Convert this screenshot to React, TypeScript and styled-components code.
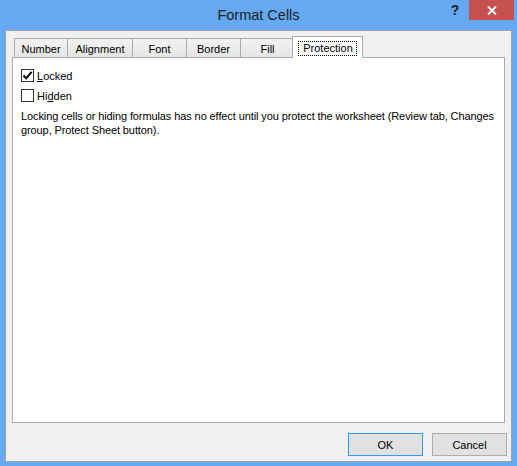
import React, { useState } from "react";
import styled, { createGlobalStyle, css } from "styled-components";

const GlobalStyle = createGlobalStyle`
  html, body {
    margin: 0;
    padding: 0;
    background: #64a9f2;
  }
  body {
    font-family: "Liberation Sans", Arial, sans-serif;
    font-size: 11px;
    color: #000;
  }
`;

const Window = styled.div`
  width: 517px;
  height: 466px;
  display: flex;
  flex-direction: column;
  background: #64a9f2;
  box-sizing: border-box;
`;

const TitleBar = styled.div`
  height: 30px;
  flex: none;
  display: grid;
  grid-template-columns: 1fr auto 1fr;
  align-items: start;
`;

const Title = styled.div`
  grid-column: 2;
  font-size: 14.5px;
  line-height: 30px;
  color: #222;
  white-space: nowrap;
`;

const TitleButtons = styled.div`
  grid-column: 3;
  display: flex;
  justify-content: flex-end;
  padding-right: 3px;
`;

const HelpButton = styled.div`
  width: 28px;
  height: 20px;
  display: flex;
  align-items: center;
  justify-content: center;
  font-weight: bold;
  font-size: 14px;
  color: #222;
`;

const CloseButton = styled.div`
  width: 45px;
  height: 20px;
  display: flex;
  align-items: center;
  justify-content: center;
  background: #c75050;
`;

const Client = styled.div`
  flex: 1;
  margin: 0 5px 4px;
  background: #f0f0f0;
  border: 1px solid #a3a3a3;
  display: flex;
  flex-direction: column;
  padding: 5px 6px 5px;
  min-height: 0;
`;

const TabStrip = styled.div`
  display: flex;
  align-items: flex-end;
  height: 21px;
  padding-left: 2px;
  flex: none;
`;

const Tab = styled.div<{ $width: number; $active?: boolean }>`
  box-sizing: border-box;
  width: ${({ $width }) => $width}px;
  height: 19px;
  margin-left: -1px;
  border: 1px solid #acacac;
  border-bottom: none;
  background: linear-gradient(#f2f2f2, #e6e6e6);
  display: flex;
  justify-content: center;
  align-items: flex-start;
  padding-top: 4px;
  line-height: 13px;
  white-space: nowrap;

  &:first-child {
    margin-left: 0;
  }

  ${({ $active }) =>
    $active &&
    css`
      height: 22px;
      margin-left: -3px;
      margin-bottom: -1px;
      padding-top: 4px;
      background: #fff;
      position: relative;
      z-index: 1;
    `}
`;

const FocusLabel = styled.span`
  border: 1px dotted #000;
  padding: 0 3px 0 4px;
  line-height: 13px;
`;

const Panel = styled.div`
  flex: 1;
  background: #fff;
  border: 1px solid #acacac;
  padding: 11px 8px 0;
  min-height: 0;
`;

const CheckRow = styled.label`
  display: flex;
  align-items: center;
  height: 13px;
  margin-bottom: 7px;
  gap: 3px;
`;

const Box = styled.span`
  box-sizing: border-box;
  width: 13px;
  height: 13px;
  border: 1px solid #333;
  background: #fff;
  display: flex;
  align-items: center;
  justify-content: center;
`;

const LabelText = styled.span`
  line-height: 13px;
  padding-top: 2px;
`;

const Key = styled.span`
  text-decoration: underline;
`;

const Note = styled.p`
  margin: 5px 0 0;
  line-height: 14px;
  letter-spacing: -0.1px;
  white-space: nowrap;
`;

const Footer = styled.div`
  flex: none;
  display: flex;
  justify-content: flex-end;
  gap: 9px;
  margin-top: 10px;
  margin-right: -2px;
`;

const Button = styled.div<{ $default?: boolean }>`
  box-sizing: border-box;
  width: 75px;
  height: 23px;
  display: flex;
  align-items: center;
  justify-content: center;
  background: #e1e1e1;
  border: 1px solid ${({ $default }) => ($default ? "#3399ff" : "#adadad")};
`;

const tabs = [
  { label: "Number", width: 54 },
  { label: "Alignment", width: 66 },
  { label: "Font", width: 55 },
  { label: "Border", width: 55 },
  { label: "Fill", width: 55 },
  { label: "Protection", width: 71 },
];

const CheckIcon = () => (
  <svg width="11" height="11" viewBox="0 0 11 11">
    <path d="M1.5 5.5 L4.2 8.3 L9.6 1.8" fill="none" stroke="#000" strokeWidth="2.1" />
  </svg>
);

const Check: React.FC<{ checked: boolean; onToggle: () => void; children: React.ReactNode }> = ({
  checked,
  onToggle,
  children,
}) => (
  <CheckRow onClick={onToggle}>
    <Box>{checked && <CheckIcon />}</Box>
    <LabelText>{children}</LabelText>
  </CheckRow>
);

const App: React.FC = () => {
  const [locked, setLocked] = useState(true);
  const [hidden, setHidden] = useState(false);
  const active = "Protection";

  return (
    <>
      <GlobalStyle />
      <Window>
        <TitleBar>
          <Title>Format Cells</Title>
          <TitleButtons>
            <HelpButton>?</HelpButton>
            <CloseButton>
              <svg width="10" height="9" viewBox="0 0 10 9">
                <path d="M1 0.5 L9 8.5 M9 0.5 L1 8.5" stroke="#fff" strokeWidth="1.9" />
              </svg>
            </CloseButton>
          </TitleButtons>
        </TitleBar>
        <Client>
          <TabStrip>
            {tabs.map((t) => (
              <Tab key={t.label} $width={t.width} $active={t.label === active}>
                {t.label === active ? <FocusLabel>{t.label}</FocusLabel> : t.label}
              </Tab>
            ))}
          </TabStrip>
          <Panel>
            <Check checked={locked} onToggle={() => setLocked(!locked)}>
              <Key>L</Key>ocked
            </Check>
            <Check checked={hidden} onToggle={() => setHidden(!hidden)}>
              Hi<Key>d</Key>den
            </Check>
            <Note>
              Locking cells or hiding formulas has no effect until you protect the worksheet (Review tab, Changes
              <br />
              group, Protect Sheet button).
            </Note>
          </Panel>
          <Footer>
            <Button $default>OK</Button>
            <Button>Cancel</Button>
          </Footer>
        </Client>
      </Window>
    </>
  );
};

export default App;
